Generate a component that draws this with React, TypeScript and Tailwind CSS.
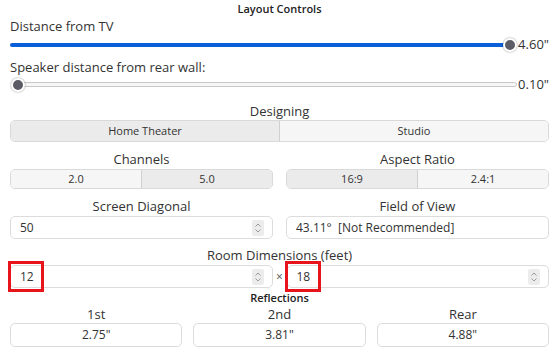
import React from "react";

const font = { fontFamily: '"Open Sans", "Noto Sans", sans-serif' };

function Spin() {
    return (
        <span className="flex h-[16px] w-[12px] flex-col items-center justify-center rounded-[2px] bg-[#ececec]">
            <svg width="8" height="12" viewBox="0 0 8 12" fill="none" stroke="#9a9a9a" strokeWidth="1">
                <path d="M1.5 4.5 L4 2 L6.5 4.5" />
                <path d="M1.5 7.5 L4 10 L6.5 7.5" />
            </svg>
        </span>
    );
}

function Slider({ pct, value, filled }: { pct: number; value: string; filled: boolean }) {
    return (
        <div className="flex h-[18px] items-center">
            <div className="relative h-[18px] flex-1">
                <div
                    className={
                        filled
                            ? "absolute left-0 right-[6px] top-[7px] h-[4px] rounded-full bg-[#0a5fd8]"
                            : "absolute left-[8px] right-0 top-[6px] h-[5px] rounded-full border border-[#c8c8c8] bg-[#f6f6f6]"
                    }
                />
                <div className="absolute bottom-0 left-[8px] right-[7px] top-0">
                    <div
                        className="absolute top-[2px] h-[14px] w-[14px] -translate-x-1/2 rounded-full border-2 border-white bg-[#5c5c66] shadow-[0_0_2px_rgba(0,0,0,0.45)]"
                        style={{ left: `${pct}%` }}
                    />
                </div>
            </div>
            <span className="ml-[1px] text-[13px] text-[#333]">{value}</span>
        </div>
    );
}

function Segmented({ items, selected, tall }: { items: string[]; selected: number; tall?: boolean }) {
    return (
        <div
            className={
                "flex overflow-hidden rounded-[5px] border border-[#d9d9d9] text-[11px] text-[#333] " +
                (tall ? "h-[22px]" : "h-[20px]")
            }
        >
            {items.map((it, i) => (
                <div
                    key={it}
                    className={
                        "flex flex-1 items-center justify-center " +
                        (i > 0 ? "border-l border-[#d0d0d0] " : "") +
                        (i === selected ? "bg-[#ebebeb]" : "bg-[#f6f6f6]")
                    }
                >
                    {it}
                </div>
            ))}
        </div>
    );
}

function Input({ value, spin, highlight }: { value: string; spin?: boolean; highlight?: boolean }) {
    return (
        <div className="relative flex h-[23px] flex-1 items-center rounded-[5px] border border-[#dcdcdc] bg-white pl-[9px] pr-[8px] text-[12px] text-[#333]">
            <span className="flex-1 whitespace-pre">{value}</span>
            {spin && <Spin />}
            {highlight && (
                <div className="pointer-events-none absolute left-[-3px] top-[-5px] h-[31px] w-[36px] border-[3px] border-[#e8141b]" />
            )}
        </div>
    );
}

export default function App() {
    return (
        <div className="h-[359px] w-[560px] overflow-hidden bg-white px-[10px] pr-[11px]" style={font}>
            <div className="flex h-[18px] items-center justify-center text-[11px] font-semibold text-[#222]">
                Layout Controls
            </div>
            <div className="flex h-[17px] items-center text-[13px] text-[#333]">Distance from TV</div>
            <div className="mt-[1px]">
                <Slider pct={100} value={'4.60"'} filled />
            </div>
            <div className="mt-[5px] flex h-[17px] items-center text-[13px] text-[#333]">
                Speaker distance from rear wall:
            </div>
            <Slider pct={0} value={'0.10"'} filled={false} />

            <div className="mt-[9px] flex h-[17px] items-center justify-center text-[13px] text-[#333]">Designing</div>
            <Segmented items={["Home Theater", "Studio"]} selected={0} tall />

            <div className="mt-[9px] grid grid-cols-2 gap-x-[13px]">
                <div>
                    <div className="flex h-[18px] items-center justify-center text-[13px] text-[#333]">Channels</div>
                    <Segmented items={["2.0", "5.0"]} selected={1} />
                </div>
                <div>
                    <div className="flex h-[18px] items-center justify-center text-[13px] text-[#333]">Aspect Ratio</div>
                    <Segmented items={["16:9", "2.4:1"]} selected={0} />
                </div>
            </div>

            <div className="mt-[9px] grid grid-cols-2 gap-x-[13px]">
                <div>
                    <div className="flex h-[18px] items-center justify-center text-[13px] text-[#333]">Screen Diagonal</div>
                    <div className="flex">
                        <Input value="50" spin />
                    </div>
                </div>
                <div>
                    <div className="flex h-[18px] items-center justify-center text-[13px] text-[#333]">Field of View</div>
                    <div className="flex">
                        <Input value="43.11°  [Not Recommended]" />
                    </div>
                </div>
            </div>

            <div className="mt-[8px] flex h-[18px] items-center justify-center text-[13px] text-[#333]">
                Room Dimensions (feet)
            </div>
            <div className="flex items-center">
                <Input value="12" spin highlight />
                <span className="w-[14px] text-center text-[12px] text-[#555]">×</span>
                <Input value="18" spin highlight />
            </div>

            <div className="mt-[2px] flex h-[16px] items-center justify-center text-[11px] font-semibold text-[#222]">
                Reflections
            </div>
            <div className="grid grid-cols-3 gap-x-[11px]">
                {[
                    ["1st", '2.75"'],
                    ["2nd", '3.81"'],
                    ["Rear", '4.88"'],
                ].map(([l, v]) => (
                    <div key={l}>
                        <div className="flex h-[17px] items-center justify-center text-[13px] text-[#333]">{l}</div>
                        <div className="flex h-[24px] items-center justify-center rounded-[5px] border border-[#dcdcdc] text-[12px] text-[#333]">
                            {v}
                        </div>
                    </div>
                ))}
            </div>
        </div>
    );
}
